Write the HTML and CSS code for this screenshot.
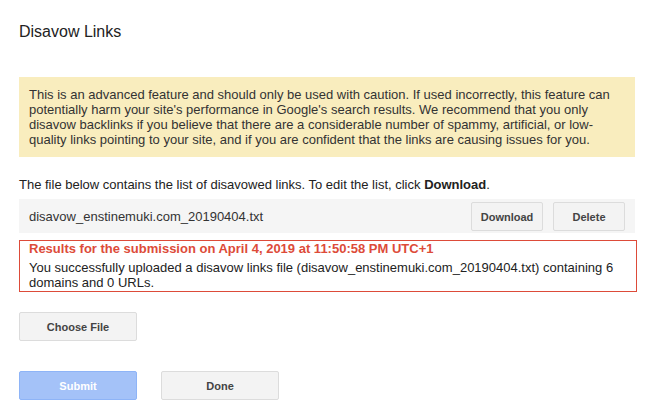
FILE: index.html
```html
<!DOCTYPE html>
<html>
<head>
<meta charset="utf-8">
<link rel="stylesheet" href="styles.css">
</head>
<body>
<div class="page">
  <h1 class="title">Disavow Links</h1>
  <div class="warning">This is an advanced feature and should only be used with caution. If used incorrectly, this feature can potentially harm your site's performance in Google's search results. We recommend that you only disavow backlinks if you believe that there are a considerable number of spammy, artificial, or low-quality links pointing to your site, and if you are confident that the links are causing issues for you.</div>
  <p class="intro">The file below contains the list of disavowed links. To edit the list, click <b>Download</b>.</p>
  <div class="file-row">
    <span class="file-name">disavow_enstinemuki.com_20190404.txt</span>
    <div class="file-actions">
      <button class="btn">Download</button>
      <button class="btn">Delete</button>
    </div>
  </div>
  <div class="result">
    <div class="result-title">Results for the submission on April 4, 2019 at 11:50:58 PM UTC+1</div>
    <div class="result-text">You successfully uploaded a disavow links file (disavow_enstinemuki.com_20190404.txt) containing 6 domains and 0 URLs.</div>
  </div>
  <div class="choose-row">
    <button class="btn btn-wide">Choose File</button>
  </div>
  <div class="submit-row">
    <button class="btn btn-wide btn-primary">Submit</button>
    <button class="btn btn-wide">Done</button>
  </div>
</div>
</body>
</html>
```

FILE: styles.css
```css
html, body {
  margin: 0;
  padding: 0;
  background: #ffffff;
}

.page {
  width: 616px;
  padding: 22px 0 0 19px;
  font-family: Arial, "Liberation Sans", sans-serif;
  font-size: 13px;
  line-height: 15px;
  color: #222222;
}

.title {
  margin: 0;
  font-size: 16px;
  line-height: 20px;
  font-weight: normal;
  color: #222222;
}

.warning {
  margin-top: 35px;
  padding: 10px 10px;
  background: #f9edbe;
  color: #333333;
}

.intro {
  margin: 20px 0 0 0;
}

.intro b {
  font-weight: bold;
}

.file-row {
  margin-top: 7px;
  height: 34px;
  background: #f5f5f5;
  display: flex;
  align-items: center;
  justify-content: space-between;
  padding: 0 10px;
}

.file-name {
  color: #333333;
}

.file-actions {
  display: flex;
  gap: 10px;
  padding-top: 1px;
}

.btn {
  box-sizing: border-box;
  width: 72px;
  height: 29px;
  padding: 0;
  border: 1px solid #dcdcdc;
  border-radius: 2px;
  background: #f3f3f3;
  font-family: Arial, "Liberation Sans", sans-serif;
  font-size: 11px;
  font-weight: bold;
  color: #444444;
  cursor: default;
}

.btn-wide {
  width: 118px;
}

.btn-primary {
  background: #a4c2f8;
  border-color: #8eb4f7;
  color: #ffffff;
}

.result {
  margin-top: 7px;
  width: 618px;
  box-sizing: border-box;
  border: 1px solid #dd4b39;
  padding: 0 9px 1px 9px;
}

.result-title {
  color: #dd4b39;
  font-weight: bold;
  margin-bottom: 4px;
}

.result-text {
  color: #222222;
}

.choose-row {
  margin-top: 20px;
  display: flex;
}

.submit-row {
  margin-top: 30px;
  display: flex;
  gap: 24px;
}
```
